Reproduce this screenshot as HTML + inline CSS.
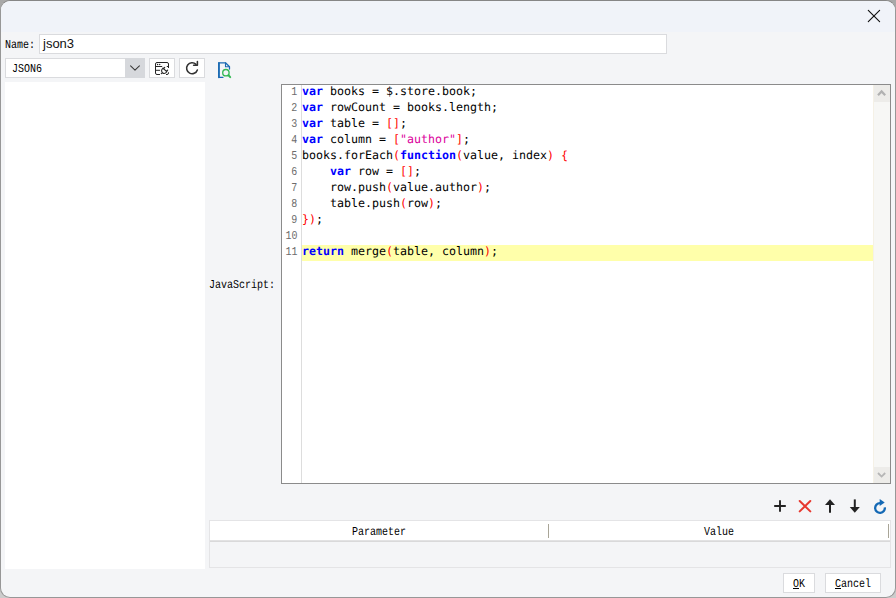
<!DOCTYPE html>
<html lang="en">
<head>
<meta charset="utf-8">
<title>json3</title>
<style>
html,body{margin:0;padding:0;}
body{width:896px;height:598px;overflow:hidden;background:linear-gradient(#a8a8a8 0,#a8a8a8 50%,#cccccc 50%,#cccccc 100%);position:relative;font-family:"Liberation Mono","Noto Sans CJK SC",monospace;}
.win{position:absolute;left:0;top:0;width:896px;height:598px;box-sizing:border-box;border:1px solid #979797;border-top-color:#868686;border-radius:10px;background:#f4f5f7;overflow:hidden;}
.abs{position:absolute;}
.titlebar{position:absolute;left:-1px;top:-1px;width:896px;height:32px;background:#f0f3f9;box-shadow:inset 0 1px 0 #f7f9fd;}
/* SimSun-like half-width labels */
.ss{position:absolute;font-family:"Liberation Mono","Noto Sans CJK SC",monospace;font-size:12px;line-height:14px;height:14px;white-space:pre;color:#000;transform:scaleX(0.8333) rotate(0.03deg);transform-origin:0 10px;}
.ss.r{transform-origin:100% 10px;text-align:right;}
.box{position:absolute;box-sizing:border-box;background:#fff;border:1px solid #dadbde;}
.code{position:absolute;left:302px;top:85px;font-family:"DejaVu Sans Mono","Liberation Mono",monospace;font-size:11.63px;line-height:16px;letter-spacing:0;color:#000;}
.code div{height:16px;position:relative;white-space:pre;transform:rotate(0.03deg);transform-origin:0 50%;}
.code span.t{position:relative;top:-2px;}
.ss.ln{color:#6c6c6c;}
.k{color:#0000ff;font-weight:bold;}
.p{color:#ff0000;}
.s{color:#dc009c;}
</style>
</head>
<body>
<div class="win">
  <div class="titlebar"></div>
</div>
<!-- all coordinates below are page coordinates -->
<svg class="abs" style="left:864px;top:6px" width="20" height="20" viewBox="0 0 20 20"><path d="M4.3 4.3 L15.6 15.6 M15.6 4.3 L4.3 15.6" stroke="#111" stroke-width="1.15" stroke-linecap="round" fill="none"/></svg>

<!-- Name row -->
<div class="ss" style="left:5px;top:38.3px">Name:</div>
<div class="box" style="left:39px;top:34px;width:628px;height:20px"></div>
<div class="abs" style="left:43px;top:36px;font-family:'Liberation Sans',sans-serif;font-size:13px;line-height:16px;color:#111">json3</div>

<!-- combo -->
<div class="box" style="left:5px;top:58px;width:140px;height:20px"></div>
<div class="abs" style="left:125px;top:58px;width:20px;height:20px;background:#d6d8dc"></div>
<svg class="abs" style="left:125px;top:58px" width="20" height="20" viewBox="0 0 20 20"><path d="M5.6 7.9 L10 12.1 L14.4 7.9" stroke="#3a3a3a" stroke-width="1.1" fill="none" stroke-linecap="round" stroke-linejoin="round"/></svg>
<div class="ss" style="left:11.5px;top:61.5px">JSON6</div>

<!-- toolbar buttons -->
<div class="box" style="left:149px;top:58px;width:26px;height:20px"></div>
<div class="box" style="left:179px;top:58px;width:26px;height:20px"></div>


<!-- toolbar icons -->
<svg class="abs" style="left:149px;top:58px" width="26" height="20" viewBox="0 0 26 20" fill="none" stroke="#262626" stroke-width="1" stroke-linecap="round" stroke-linejoin="round">
<path d="M10.6 16.5 H8 a1.5 1.5 0 0 1 -1.5 -1.5 V6 a1.5 1.5 0 0 1 1.5 -1.5 H18 a1.5 1.5 0 0 1 1.5 1.5 V9.6"/>
<path d="M19.5 14.7 V15 a1.5 1.5 0 0 1 -1.5 1.5 H17.4"/>
<path d="M6.5 8.5 H12.8 M18.2 8.5 H19.5 M6.5 12.3 H10.7"/>
<circle cx="8.6" cy="6.5" r="0.7" fill="#222" stroke="none"/><circle cx="10.7" cy="6.5" r="0.7" fill="#222" stroke="none"/>
<path d="M14 10.2 L17.8 13.6 M14 10.2 L12.9 11.5 A2.6 2.6 0 0 0 16.7 14.9 L17.8 13.6 M14.7 10.5 L15.7 9.4 M17.5 13.2 L18.6 12.2 M13.4 14.6 L12.3 15.7" stroke="#2a2a2a" stroke-width="1.15"/>
</svg>
<svg class="abs" style="left:179px;top:58px" width="26" height="20" viewBox="0 0 26 20" fill="none" stroke="#333" stroke-width="1.55" stroke-linecap="round" stroke-linejoin="round">
<path d="M17 6.35 A5.5 5.5 0 1 0 18.35 11.95"/>
<path d="M14.6 7.3 H18.4 V3.4"/>
</svg>
<svg class="abs" style="left:214px;top:58px" width="22" height="22" viewBox="0 0 22 22" fill="none" stroke-linecap="round" stroke-linejoin="round">
<path d="M9 19.3 H4.9 V4.8 H11.5 L15.5 8.8 V11" stroke="#1a6ab3" stroke-width="1.25"/>
<path d="M11.5 4.8 V8.8 H15.5" stroke="#1a6ab3" stroke-width="1.1"/>
<path d="M4.9 4.8 V19.3" stroke="#1a6ab3" stroke-width="1.7"/>
<circle cx="11.9" cy="14.7" r="3.2" stroke="#35b955" stroke-width="1.35"/>
<path d="M14.5 17.3 L16.2 19.1" stroke="#35b955" stroke-width="2"/>
</svg>


<!-- param toolbar -->
<svg class="abs" style="left:770px;top:496px" width="122" height="22" viewBox="770 496 122 22" fill="none">
<path d="M774.2 506 H785.8 M780 500.3 V511.8" stroke="#222" stroke-width="1.9"/>
<path d="M799.7 501 L810.3 511.4 M810.3 501 L799.7 511.4" stroke="#e7382f" stroke-width="2" stroke-linecap="round"/>
<path d="M830 504 V512.7" stroke="#222" stroke-width="2"/><path d="M830 499.2 L835 505 H825 Z" fill="#222"/>
<path d="M854.8 499.4 V508" stroke="#222" stroke-width="2"/><path d="M854.8 512.8 L859.8 507 H849.8 Z" fill="#222"/>
<path d="M884.8 507.3 A4.85 4.85 0 1 1 880 503.15" stroke="#1469b5" stroke-width="2.3"/>
<path d="M879.7 499 L884.7 502.5 L879.7 506.1 Z" fill="#1469b5"/>
</svg>

<!-- left tree panel -->
<div class="abs" style="left:5px;top:82px;width:200px;height:487px;background:#fff"></div>

<!-- JavaScript label -->
<div class="ss" style="left:209px;top:278px">JavaScript:</div>

<!-- editor -->
<div class="abs" style="left:281px;top:84px;width:610px;height:400px;box-sizing:border-box;border:1px solid #8b8b8b;background:#fff"></div>
<div class="abs" style="left:301px;top:85px;width:1px;height:398px;background:#dddddd"></div>
<div class="abs" style="left:302px;top:245px;width:572px;height:16px;background:#ffffaa"></div>

<!-- scrollbar -->
<div class="abs" style="left:873px;top:85px;width:17px;height:398px;background:#f7f7f5;box-sizing:border-box;border-left:1px solid #f5f1e6"></div>
<div class="abs" style="left:874px;top:85px;width:16px;height:17px;background:#edece9"></div>
<div class="abs" style="left:874px;top:467px;width:16px;height:16px;background:#edece9"></div>


<!-- scrollbar arrows -->
<svg class="abs" style="left:874px;top:85px" width="16" height="17" viewBox="0 0 16 17" fill="none"><path d="M4 10.2 L7.6 6.4 L11.2 10.2" stroke="#b1b1b1" stroke-width="2.2"/></svg>
<svg class="abs" style="left:874px;top:467px" width="16" height="16" viewBox="0 0 16 16" fill="none"><path d="M4 6 L7.6 9.6 L11.2 6" stroke="#b6b6b6" stroke-width="1.8"/></svg>

<!-- line numbers -->
<div class="ss r ln" style="right:598.4px;top:85px">1</div>
<div class="ss r ln" style="right:598.4px;top:101px">2</div>
<div class="ss r ln" style="right:598.4px;top:117px">3</div>
<div class="ss r ln" style="right:598.4px;top:133px">4</div>
<div class="ss r ln" style="right:598.4px;top:149px">5</div>
<div class="ss r ln" style="right:598.4px;top:165px">6</div>
<div class="ss r ln" style="right:598.4px;top:181px">7</div>
<div class="ss r ln" style="right:598.4px;top:197px">8</div>
<div class="ss r ln" style="right:598.4px;top:213px">9</div>
<div class="ss r ln" style="right:598.4px;top:229px">10</div>
<div class="ss r ln" style="right:598.4px;top:245px">11</div>
<div class="code" id="code">
<div><span class="t"><span class="k">var</span> books = $.store.book;</span></div>
<div><span class="t"><span class="k">var</span> rowCount = books.length;</span></div>
<div><span class="t"><span class="k">var</span> table = <span class="p">[]</span>;</span></div>
<div><span class="t"><span class="k">var</span> column = <span class="p">[</span><span class="s">"author"</span><span class="p">]</span>;</span></div>
<div><span class="t">books.forEach<span class="p">(</span><span class="k">function</span><span class="p">(</span>value, index<span class="p">)</span> <span class="p">{</span></span></div>
<div><span class="t">    <span class="k">var</span> row = <span class="p">[]</span>;</span></div>
<div><span class="t">    row.push<span class="p">(</span>value.author<span class="p">)</span>;</span></div>
<div><span class="t">    table.push<span class="p">(</span>row<span class="p">)</span>;</span></div>
<div><span class="t"><span class="p">})</span>;</span></div>
<div><span class="t"> </span></div>
<div><span class="t"><span class="k">return</span> merge<span class="p">(</span>table, column<span class="p">)</span>;</span></div>
</div>

<!-- table -->
<div class="abs" style="left:209px;top:520px;width:682px;height:48px;box-sizing:border-box;border:1px solid #e4e4e6"></div>
<div class="abs" style="left:210px;top:521px;width:680px;height:19px;background:#fff"></div>
<div class="abs" style="left:210px;top:540px;width:680px;height:1px;background:#e2e2e3"></div>
<div class="abs" style="left:210px;top:541px;width:680px;height:1px;background:#d9d9da"></div>
<div class="abs" style="left:548px;top:524px;width:1px;height:14px;background:#a9a597"></div>
<div class="abs" style="left:888px;top:524px;width:1px;height:14px;background:#a9a597"></div>
<div class="ss" style="left:352px;top:525px">Parameter</div>
<div class="ss" style="left:704px;top:525px">Value</div>

<!-- buttons -->
<div class="box" style="left:783px;top:573px;width:32px;height:20px"></div>
<div class="box" style="left:825px;top:573px;width:56px;height:20px"></div>
<div class="ss" style="left:793px;top:577px"><u>O</u>K</div>
<div class="ss" style="left:835px;top:577px"><u>C</u>ancel</div>
</body>
</html>
